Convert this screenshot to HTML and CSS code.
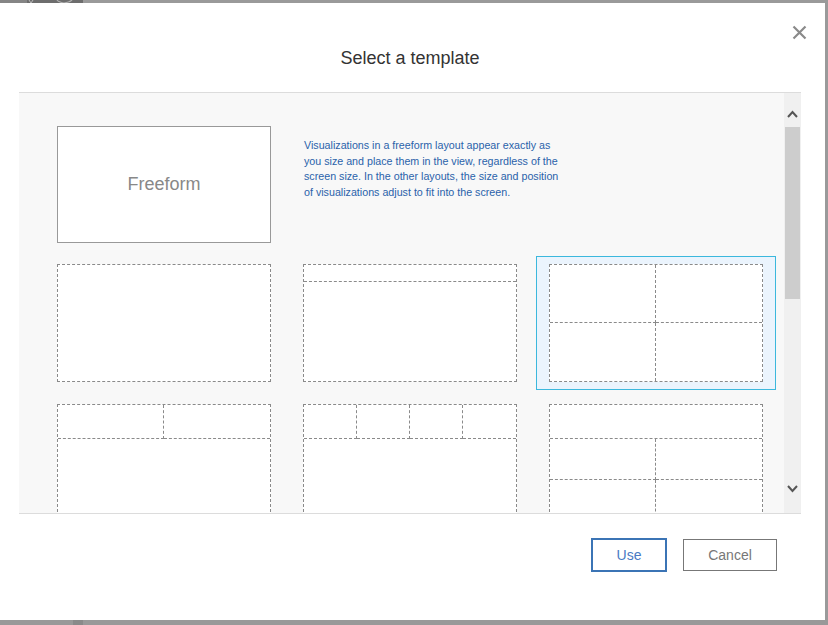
FILE: index.html
```html
<!DOCTYPE html>
<html lang="en">
<head>
<meta charset="utf-8">
<title>Select a template</title>
<link rel="stylesheet" href="styles.css">
</head>
<body>
<div class="topbar">
  <span class="tb-a"></span>
  <span class="tb-b">
    <svg width="56" height="3" viewBox="0 0 56 3"><path d="M2 0 L4 3 M6 0 L4 3" stroke="#b9b9b9" stroke-width="1"/><path d="M30 0 Q31 2 37 3 Q43 2 45 0" stroke="#b0b0b0" stroke-width="1.2" fill="none"/></svg>
  </span>
  <span class="tb-c"></span>
</div>
<div class="main">
  <div class="dialog">
    <div class="dlg-header">
      <h1 class="dlg-title">Select a template</h1>
      <button class="close" aria-label="Close">
        <svg width="15" height="15" viewBox="0 0 15 15"><path d="M1.5 1.5 L13.5 13.5 M13.5 1.5 L1.5 13.5" stroke="#8a8a8a" stroke-width="2.2" fill="none"/></svg>
      </button>
    </div>
    <div class="dlg-body">
      <div class="templates">
        <div class="tile tile-free"><div class="freeform">Freeform</div></div>
        <p class="desc">Visualizations in a freeform layout appear exactly as you size and place them in the view, regardless of the screen size. In the other layouts, the size and position of visualizations adjust to fit into the screen.</p>

        <div class="tile"><div class="layout"></div></div>
        <div class="tile"><div class="layout l-header"><div class="c b"></div><div class="c"></div></div></div>
        <div class="tile selected"><div class="layout l-quad"><div class="c r b"></div><div class="c b"></div><div class="c r"></div><div class="c"></div></div></div>

        <div class="tile"><div class="layout l-two"><div class="c r b"></div><div class="c b"></div><div class="c span"></div></div></div>
        <div class="tile"><div class="layout l-four"><div class="c r b"></div><div class="c r b"></div><div class="c r b"></div><div class="c b"></div><div class="c span"></div></div></div>
        <div class="tile"><div class="layout l-mix"><div class="c b span"></div><div class="c r b"></div><div class="c b"></div><div class="c r"></div><div class="c"></div></div></div>
      </div>
      <div class="scrollbar">
        <span class="sb-up"><svg width="11" height="8" viewBox="0 0 11 8"><path d="M1 7 L5.5 2 L10 7" stroke="#555" stroke-width="2" fill="none"/></svg></span>
        <span class="sb-thumb"></span>
        <span class="sb-rest"></span>
        <span class="sb-down"><svg width="11" height="8" viewBox="0 0 11 8"><path d="M1 1 L5.5 6 L10 1" stroke="#555" stroke-width="2" fill="none"/></svg></span>
      </div>
    </div>
    <div class="dlg-footer">
      <button class="btn btn-primary">Use</button>
      <button class="btn">Cancel</button>
    </div>
  </div>
  <div class="edge-right"></div>
</div>
<div class="bottombar"><span class="bb-a"></span><span class="bb-b"></span><span class="bb-c"></span></div>
</body>
</html>
```

FILE: styles.css
```css
* { box-sizing: border-box; }

html, body {
  margin: 0;
  padding: 0;
}

body {
  width: 828px;
  height: 625px;
  overflow: hidden;
  background: #9a9a9a;
  font-family: "Liberation Sans", Arial, sans-serif;
}

.topbar {
  display: flex;
  height: 3px;
}
.tb-a { width: 27px; background: #858585; }
.tb-b { width: 56px; background: #6d6d6d; display: block; line-height: 0; }
.tb-b svg { display: block; }
.tb-c { flex: 1; background: #9a9a9a; }

.main {
  display: flex;
  height: 617px;
}

.dialog {
  width: 825px;
  background: #fff;
  display: flex;
  flex-direction: column;
}

.edge-right {
  flex: 1;
  background: #9a9a9a;
}

.bottombar {
  display: flex;
  height: 5px;
}
.bb-a { width: 73px; background: #999; }
.bb-b { width: 10px; background: #8a8a8a; }
.bb-c { flex: 1; background: #999; }

.dlg-header {
  position: relative;
  height: 89px;
  padding: 44px 24px 0 19px;
  text-align: center;
}

.dlg-title {
  margin: 0;
  font-size: 18px;
  line-height: 22px;
  font-weight: normal;
  color: #333;
}

.close {
  position: absolute;
  top: 22px;
  right: 18px;
  width: 15px;
  height: 15px;
  padding: 0;
  border: 0;
  background: none;
  line-height: 0;
}

.dlg-body {
  display: flex;
  height: 422px;
  margin: 0 24px 0 19px;
  border-top: 1px solid #dcdcdc;
  border-bottom: 1px solid #dcdcdc;
  background: #f8f8f8;
}

.templates {
  flex: 1;
  overflow: hidden;
  padding: 25px 0 0 25px;
  display: grid;
  grid-template-columns: repeat(3, 240px);
  column-gap: 6px;
  row-gap: 6px;
  align-content: start;
}

.tile {
  border: 1px solid transparent;
  padding: 7px 12px;
}
.tile-free { padding-bottom: 6px; }
.tile.selected {
  border-color: #3cb8dd;
  background: #ebf4fd;
}

.freeform {
  width: 214px;
  height: 117px;
  border: 1px solid #999;
  background: #fff;
  display: flex;
  align-items: center;
  justify-content: center;
  font-size: 18px;
  color: #888;
}

.desc {
  grid-column: 2 / span 2;
  margin: 0;
  padding: 20px 0 0 14px;
  width: 277px;
  font-size: 10.7px;
  line-height: 15.7px;
  color: #2a62aa;
}

.layout {
  width: 214px;
  height: 118px;
  border: 1px dashed #8a8a8a;
  background: #fff;
  display: grid;
}
.c.r { border-right: 1px dashed #8a8a8a; }
.c.b { border-bottom: 1px dashed #8a8a8a; }

.l-header { grid-template-rows: 17px 1fr; }
.l-quad { grid-template-columns: 1fr 1fr; grid-template-rows: 1fr 1fr; }
.l-two { grid-template-columns: 106px 1fr; grid-template-rows: 34px 1fr; }
.l-two .span { grid-column: 1 / span 2; }
.l-four { grid-template-columns: repeat(4, 53px); grid-template-rows: 34px 1fr; }
.l-four .span { grid-column: 1 / span 4; }
.l-mix { grid-template-columns: 106px 1fr; grid-template-rows: 34px 41px 1fr; }
.l-mix .span { grid-column: 1 / span 2; }

.scrollbar {
  width: 17px;
  background: #f0f0f0;
  display: flex;
  flex-direction: column;
}
.sb-up {
  height: 34px;
  padding-top: 17px;
  display: flex;
  justify-content: center;
  align-items: flex-start;
}
.sb-thumb {
  height: 172px;
  margin: 0 1px;
  background: #cdcdcd;
}
.sb-rest { flex: 1; }
.sb-down {
  height: 36px;
  padding-top: 8px;
  display: flex;
  justify-content: center;
  align-items: flex-start;
}
.scrollbar svg { display: block; }

.dlg-footer {
  flex: 1;
  display: flex;
  justify-content: flex-end;
  align-items: flex-start;
  gap: 17px;
  padding: 25px 48px 0 0;
}

.btn {
  width: 94px;
  height: 32px;
  padding: 0;
  border: 1px solid #777;
  background: #fff;
  color: #777;
  font-family: "Liberation Sans", Arial, sans-serif;
  font-size: 14px;
}
.btn-primary {
  width: 74px;
  border-color: #3b74b5;
  outline: 1px solid #3b74b5;
  color: #4a7bc4;
}
```
